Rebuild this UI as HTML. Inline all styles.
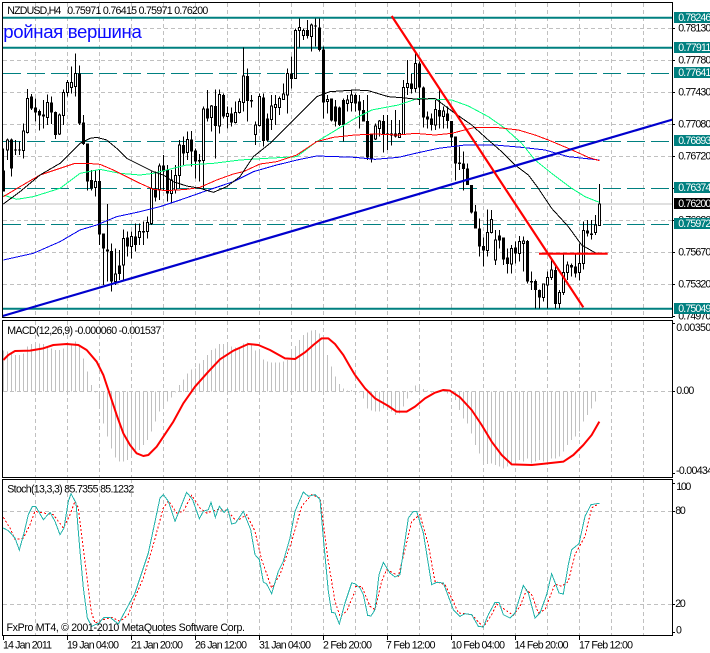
<!DOCTYPE html>
<html><head><meta charset="utf-8"><title>NZDUSD,H4</title>
<style>
html,body{margin:0;padding:0;background:#fff;overflow:hidden}
svg{display:block}
text{font-family:"Liberation Sans",sans-serif;font-size:10.6px;fill:#000}
.w{fill:#fff}
</style></head><body>
<svg width="710" height="653" viewBox="0 0 710 653" xmlns="http://www.w3.org/2000/svg">
<rect width="710" height="653" fill="#fff"/>
<!-- vertical grid -->
<path fill="none" stroke="#c0c0c0" stroke-dasharray="4 3" d="M35.5 3V317M67.5 3V317M99.5 3V317M131.5 3V317M163.5 3V317M195.5 3V317M227.5 3V317M259.5 3V317M291.5 3V317M323.5 3V317M355.5 3V317M387.5 3V317M419.5 3V317M451.5 3V317M483.5 3V317M515.5 3V317M547.5 3V317M579.5 3V317M611.5 3V317M643.5 3V317
M35.5 321V477M67.5 321V477M99.5 321V477M131.5 321V477M163.5 321V477M195.5 321V477M227.5 321V477M259.5 321V477M291.5 321V477M323.5 321V477M355.5 321V477M387.5 321V477M419.5 321V477M451.5 321V477M483.5 321V477M515.5 321V477M547.5 321V477M579.5 321V477M611.5 321V477M643.5 321V477
M35.5 479V635M67.5 479V635M99.5 479V635M131.5 479V635M163.5 479V635M195.5 479V635M227.5 479V635M259.5 479V635M291.5 479V635M323.5 479V635M355.5 479V635M387.5 479V635M419.5 479V635M451.5 479V635M483.5 479V635M515.5 479V635M547.5 479V635M579.5 479V635M611.5 479V635M643.5 479V635
M3 28.5H672M3 60.5H672M3 92.5H672M3 124.5H672M3 156.5H672M3 220.5H672M3 252.5H672M3 284.5H672
M3 391.5H672M3 511.5H672M3 604.5H672"/>
<!-- horizontal levels -->
<path fill="none" stroke="#c0c0c0" d="M3 204H672"/>
<path fill="none" stroke="#008080" stroke-width="2" d="M3 17.7H672M3 47.7H672M3 308.7H672"/>
<path fill="none" stroke="#008080" stroke-dasharray="18 6" d="M3 73.5H672M3 141.5H672M3 188.5H672M3 224.5H672"/>
<!-- left half candles + MAs, 3x coordinates -->
<g transform="scale(.33333)">
<path fill="none" stroke="#000" stroke-width="3" shape-rendering="crispEdges" d="M10.5 445V575M22.5 415V480M34.5 415V530M46.5 420V465M58.5 425V465M70.5 370V475M82.5 267V400M94.5 282V330M106.5 295V365M118.5 328V392M130.5 300V385M142.5 283V375M154.5 290V372M166.5 335V417M178.5 340V405M190.5 268V375M202.5 240V290M214.5 200V280M226.5 160V290M238.5 197V375M250.5 345V435M262.5 430V572M274.5 510V572M286.5 510V590M298.5 510V735M310.5 700V855M322.5 612V845M334.5 730V875M346.5 745V855M358.5 750V840M370.5 688V838M382.5 695V770M394.5 695V775M406.5 670V755M418.5 670V735M430.5 665V735M442.5 650V715M454.5 515V675M466.5 515V605M478.5 490V600M490.5 465V570M502.5 495V605M514.5 510V610M526.5 495V580M538.5 420V565M550.5 410V495M562.5 395V480M574.5 393V500M586.5 445V535M598.5 462V545M610.5 320V565M622.5 270V365M634.5 315V395M646.5 268V475M658.5 268V400M670.5 280V355M682.5 320V385M694.5 322V380M706.5 305V370M718.5 295V340M730.5 142V335M742.5 205V365M754.5 285V322M766.5 365V435M778.5 280V380M790.5 280V440M802.5 340V425M814.5 285V390M826.5 285V375M838.5 290V345M850.5 250V300M862.5 205V340M874.5 170V265M886.5 85V235M898.5 55V142M910.5 85V120M922.5 60V115M934.5 70V155M946.5 55V140M958.5 55V155M970.5 140V355M982.5 285V340M994.5 295V365M1006.5 300V380M1018.5 320V378M1030.5 295V425M1042.5 285V335M1054.5 268V335"/>
<path fill="none" stroke="#000" stroke-width="9" shape-rendering="crispEdges" d="M10.5 512V575M34.5 418V505M46.5 449V452M58.5 449V452M94.5 290V325M106.5 322V338M118.5 333V347M130.5 343V350M154.5 307V337M166.5 336V405M238.5 220V370M250.5 367V432M262.5 430V545M274.5 540V565M298.5 543V703M310.5 700V745M322.5 748V755M334.5 753V845M358.5 797V822M382.5 712V740M406.5 710V735M430.5 693V698M466.5 565V592M490.5 497V515M502.5 510V580M550.5 435V460M574.5 418V455M586.5 452V485M598.5 480V484M622.5 325V355M646.5 318V378M670.5 285V350M694.5 340V367M742.5 228V303M754.5 300V304M790.5 293V423M802.5 355V422M874.5 220V237M922.5 90V108M946.5 77V80M958.5 82V150M970.5 148V308M994.5 295V362M1006.5 320V365M1018.5 322V375M1030.5 300V375"/>
<path fill="#fff" stroke="#000" stroke-width="3" shape-rendering="crispEdges" d="M19.5 420h6V450h-6zM67.5 393h6V452h-6zM79.5 295h6V398h-6zM139.5 307h6V352h-6zM175.5 345h6V402h-6zM187.5 277h6V347h-6zM199.5 247h6V277h-6zM211.5 247h6V262h-6zM223.5 220h6V260h-6zM283.5 545h6V563h-6zM343.5 822h6V845h-6zM367.5 715h6V795h-6zM391.5 710h6V740h-6zM415.5 695h6V712h-6zM439.5 668h6V695h-6zM451.5 565h6V670h-6zM475.5 498h6V568h-6zM511.5 540h6V580h-6zM523.5 527h6V570h-6zM535.5 435h6V527h-6zM559.5 418h6V457h-6zM607.5 327h6V482h-6zM631.5 318h6V352h-6zM655.5 283h6V378h-6zM679.5 340h6V350h-6zM703.5 337h6V368h-6zM715.5 305h6V337h-6zM727.5 228h6V307h-6zM763.5 375h6V403h-6zM775.5 290h6V377h-6zM811.5 318h6V358h-6zM823.5 313h6V323h-6zM835.5 296h6V323h-6zM847.5 282h6V298h-6zM859.5 220h6V285h-6zM883.5 92h6V235h-6zM895.5 82h6V92h-6zM907.5 92h6V107h-6zM931.5 75h6V110h-6zM979.5 298h6V305h-6zM1039.5 300h6V310h-6zM1051.5 285h6V308h-6z"/>
<g fill="none" stroke-width="3" shape-rendering="crispEdges">
<path stroke="#0000ee" d="M10 780L100 760 180 725 240 690 290 675 350 650 420 635 480 620 540 600 620 572 700 545 760 515 830 495 900 478 950 468 1010 470 1065 472"/>
<path stroke="#00ff7f" d="M10 585L50 598 100 590 180 565 240 520 300 508 360 520 420 525 460 520 500 510 560 495 640 490 720 480 800 475 890 470 950 425 1000 395 1065 355"/>
<path stroke="#f00" d="M10 590L60 560 120 525 180 505 225 490 260 490 300 493 340 510 380 530 420 550 460 568 500 572 560 568 600 562 650 540 700 522 730 515 780 492 830 485 890 465 950 425 1000 412 1065 405"/>
<path stroke="#000" d="M10 612L60 575 120 525 180 490 240 430 270 415 290 412 320 420 350 445 380 475 430 500 460 515 490 525 520 545 560 558 600 565 640 577 680 560 720 530 760 470 810 430 860 380 910 330 950 290 990 275 1065 270"/>
</g>
</g>
<!-- right half candles + MAs -->
<g transform="translate(355,0) scale(.33333)">
<path fill="none" stroke="#000" stroke-width="3" shape-rendering="crispEdges" d="M1.5 280V335M13.5 285V385M25.5 300V365M37.5 285V480M49.5 400V488M61.5 370V420M73.5 360V410M85.5 345V458M97.5 345V450M109.5 360V437M121.5 330V412M133.5 360V412M145.5 240V405M157.5 180V285M169.5 222V280M181.5 160V278M193.5 185V315M205.5 260V382M217.5 335V385M229.5 340V392M241.5 300V390M253.5 270V385M265.5 320V385M277.5 320V385M289.5 363V440M301.5 410V542M313.5 440V510M325.5 455V572M337.5 490V555M349.5 555V640M361.5 615V685M373.5 655V770M385.5 712V800M397.5 628V770M409.5 630V700M421.5 690V795M433.5 690V745M445.5 712V795M457.5 745V820M469.5 735V820M481.5 725V790M493.5 708V785M505.5 710V815M517.5 720V850M529.5 815V870M541.5 838V925M553.5 868V925M565.5 850V905M577.5 815V925M589.5 775V840M601.5 790V925M613.5 870V925M625.5 762V885M637.5 785V840M649.5 790V830M661.5 762V832M673.5 730V842M685.5 665V808M697.5 660V710M709.5 660V718M721.5 645V705M733.5 552V677"/>
<path fill="none" stroke="#000" stroke-width="9" shape-rendering="crispEdges" d="M1.5 285V310M13.5 305V332M25.5 330V365M37.5 363V473M49.5 403V475M85.5 363V405M97.5 400V405M109.5 400V406M121.5 400V410M169.5 250V267M193.5 190V262M205.5 262V352M217.5 350V358M229.5 355V375M253.5 330V350M277.5 340V363M289.5 363V412M301.5 410V490M313.5 488V492M325.5 490V507M337.5 505V555M349.5 555V638M361.5 635V685M373.5 685V740M385.5 738V752M433.5 707V722M445.5 712V778M457.5 772V792M481.5 743V760M517.5 723V845M529.5 843V848M541.5 843V870M553.5 870V892M601.5 810V912M649.5 795V802M661.5 800V820M697.5 692V700M709.5 700V705"/>
<path fill="#fff" stroke="#000" stroke-width="3" shape-rendering="crispEdges" d="M58.5 378h6V417h-6zM70.5 363h6V385h-6zM130.5 400h6V412h-6zM142.5 262h6V403h-6zM154.5 250h6V262h-6zM178.5 190h6V265h-6zM238.5 328h6V375h-6zM262.5 333h6V350h-6zM394.5 697h6V752h-6zM406.5 658h6V697h-6zM418.5 720h6V780h-6zM466.5 745h6V792h-6zM490.5 725h6V760h-6zM502.5 723h6V730h-6zM562.5 852h6V892h-6zM574.5 832h6V855h-6zM586.5 810h6V832h-6zM610.5 878h6V910h-6zM622.5 818h6V878h-6zM634.5 795h6V818h-6zM670.5 790h6V818h-6zM682.5 692h6V790h-6zM718.5 675h6V698h-6zM730.5 612h6V677h-6z"/>
<g fill="none" stroke-width="3" shape-rendering="crispEdges">
<path stroke="#0000ee" d="M0 472L60 478 130 472 190 458 250 445 330 435 420 435 500 442 570 450 640 470 733 480"/>
<path stroke="#00ff7f" d="M0 355L50 330 130 315 190 295 290 300 340 318 400 350 450 385 500 430 540 480 590 520 650 565 690 590 733 607"/>
<path stroke="#f00" d="M0 405L60 402 130 405 180 400 240 405 290 400 360 382 430 383 490 390 540 405 580 420 640 445 700 472 733 482"/>
<path stroke="#000" d="M0 270L40 272 100 290 140 293 190 298 240 295 300 340 350 375 400 420 440 455 480 495 520 525 550 565 590 625 640 680 680 735 720 758 733 760"/>
</g>
</g>
<!-- trend lines -->
<path fill="none" stroke="#0000cd" stroke-width="2.2" d="M2.7 316L672.7 119.5"/>
<path fill="none" stroke="#f00" stroke-width="2.2" d="M391.7 16L583.3 307.3M539 253.7H607.7"/>
<!-- MACD histogram -->
<g transform="scale(.33333)">
<path fill="none" stroke="#c0c0c0" stroke-width="3" shape-rendering="crispEdges" transform="translate(0,960)" d="M10.5 214V92M22.5 214V95M34.5 214V98M46.5 214V105M58.5 214V105M70.5 214V100M82.5 214V80M94.5 214V72M106.5 214V70M118.5 214V70M130.5 214V72M142.5 214V80M154.5 214V85M166.5 214V90M178.5 214V90M190.5 214V85M202.5 214V75M214.5 214V75M226.5 214V65M238.5 214V75M250.5 214V115M262.5 214V155M274.5 214V195M286.5 214V217M298.5 214V255M310.5 214V310M322.5 214V350M334.5 214V385M346.5 214V412M358.5 214V425M370.5 214V425M382.5 214V420M394.5 214V405M406.5 214V390M418.5 214V390M430.5 214V375M442.5 214V360M454.5 214V335M466.5 214V305M478.5 214V275M490.5 214V260M502.5 214V245M514.5 214V232M526.5 214V218M538.5 214V195M550.5 214V178M562.5 214V160M574.5 214V148M586.5 214V145M598.5 214V130M610.5 214V120M622.5 214V105M634.5 214V90M646.5 214V85M658.5 214V72M670.5 214V72M682.5 214V72M694.5 214V80M706.5 214V82M718.5 214V85M730.5 214V70M742.5 214V68M754.5 214V70M766.5 214V92M778.5 214V95M790.5 214V118M802.5 214V125M814.5 214V128M826.5 214V128M838.5 214V128M850.5 214V125M862.5 214V120M874.5 214V90M886.5 214V78M898.5 214V60M910.5 214V45M922.5 214V38M934.5 214V32M946.5 214V30M958.5 214V40M970.5 214V55M982.5 214V105M994.5 214V140M1006.5 214V170M1018.5 214V192M1030.5 214V205M1042.5 214V212M1054.5 214V210"/>
<path fill="none" stroke="#f00" stroke-width="6" stroke-linejoin="round" transform="translate(0,960)" d="M10 120L25 105 45 93 90 92 130 85 160 75 200 72 235 75 260 90 290 125 310 165 330 225 350 285 370 340 390 375 410 400 430 408 445 405 470 380 490 350 520 305 550 250 585 200 625 155 660 118 700 92 745 72 775 75 810 90 855 115 885 117 915 97 940 75 965 55 985 55 1005 72 1030 105 1050 140 1065 165"/>
</g>
<g transform="translate(355,320) scale(.33333)">
<path fill="none" stroke="#c0c0c0" stroke-width="3" shape-rendering="crispEdges" d="M13.5 214V218M25.5 214V235M37.5 214V265M49.5 214V272M61.5 214V275M73.5 214V275M85.5 214V265M97.5 214V270M109.5 214V275M121.5 214V285M133.5 214V280M145.5 214V260M157.5 214V235M169.5 214V218M181.5 214V197M193.5 214V197M205.5 214V207M217.5 214V212M229.5 214V218M241.5 214V218M265.5 214V216M277.5 214V220M289.5 214V228M301.5 214V240M313.5 214V270M325.5 214V295M337.5 214V310M349.5 214V340M361.5 214V375M373.5 214V400M385.5 214V425M397.5 214V432M409.5 214V430M421.5 214V435M433.5 214V440M445.5 214V445M457.5 214V440M469.5 214V435M481.5 214V435M493.5 214V420M505.5 214V425M517.5 214V415M529.5 214V430M541.5 214V425M553.5 214V420M565.5 214V425M577.5 214V425M589.5 214V415M601.5 214V415M613.5 214V410M625.5 214V395M637.5 214V375M649.5 214V360M661.5 214V350M673.5 214V335M685.5 214V305M697.5 214V285M709.5 214V265M721.5 214V245"/>
<path fill="none" stroke="#f00" stroke-width="6" stroke-linejoin="round" d="M0 165L30 205 60 235 100 258 125 275 155 275 180 260 210 235 240 218 265 210 285 212 315 232 350 270 380 315 410 365 440 405 470 433 530 435 570 431 625 425 655 405 685 375 710 345 733 305"/>
</g>
<!-- Stochastic -->
<g transform="translate(0,478) scale(.33333)" fill="none" stroke-width="3" shape-rendering="crispEdges">
<path stroke="#f00" stroke-dasharray="6 6" d="M10 118L30 150 45 185 70 180 90 140 105 100 130 105 160 110 190 150 210 110 225 70 235 90 250 210 262 310 275 405 285 435 310 425 335 418 360 430 385 410 400 370 430 300 460 200 490 90 505 68 530 105 550 100 575 52 600 90 620 105 650 95 680 97 710 130 740 110 765 160 785 245 815 330 840 290 875 190 905 85 935 50 960 60 985 250 1005 370 1020 415 1040 400 1065 340"/>
<path stroke="#20b2aa" d="M10 150L25 158 45 180 58 216 72 165 85 110 97 86 107 85 130 125 150 103 165 130 180 170 192 150 205 70 213 47 228 75 240 220 250 330 262 420 275 445 297 435 312 418 330 418 355 438 370 410 405 345 430 270 445 225 480 60 490 50 505 70 525 130 560 43 578 65 598 122 610 100 625 95 633 73 646 118 658 85 672 103 683 92 695 138 707 135 730 100 752 155 765 230 778 245 790 312 800 318 815 347 835 280 850 250 870 180 885 100 910 42 925 55 945 50 960 65 970 180 985 340 995 403 1005 405 1018 438 1035 375 1055 315 1065 317"/>
</g>
<g transform="translate(355,478) scale(.33333)" fill="none" stroke-width="3" shape-rendering="crispEdges">
<path stroke="#f00" stroke-dasharray="6 6" d="M0 325L20 325 45 385 60 395 80 310 95 275 115 285 130 295 150 215 170 130 195 110 220 200 240 310 270 320 295 370 310 405 350 410 385 447 410 410 425 378 450 395 475 412 495 385 515 335 530 350 550 405 570 395 600 318 620 325 640 310 660 230 690 175 710 90 733 76"/>
<path stroke="#20b2aa" d="M0 317L15 330 25 350 38 412 48 414 60 395 72 290 85 253 105 285 120 297 135 290 160 120 175 100 185 100 205 165 230 320 245 313 265 315 295 395 315 415 330 407 350 410 370 445 385 447 400 410 420 373 432 373 445 410 465 420 480 405 505 322 520 345 540 420 555 405 575 350 590 287 612 345 625 348 640 260 650 215 672 197 690 115 708 80 733 76"/>
</g>
<!-- frames -->
<path fill="none" stroke="#000" shape-rendering="crispEdges" d="M2.5 2.5H672.5V317.5H2.5ZM2.5 320.5H672.5V477.5H2.5ZM2.5 479.5H672.5V635.5H2.5Z
M672 28.5h3M672 60.5h3M672 92.5h3M672 124.5h3M672 156.5h3M672 188.5h3M672 220.5h3M672 252.5h3M672 284.5h3M672 316.5h3
M672 323.5h3M672 391.5h3M672 473.5h3M672 483.5h3M672 511.5h3M672 604.5h3M672 632.5h3
M3.5 636v4M67.5 636v4M131.5 636v4M195.5 636v4M259.5 636v4M323.5 636v4M387.5 636v4M451.5 636v4M515.5 636v4M579.5 636v4"/>
<!-- titles -->
<text x="7.3" y="14" textLength="54">NZDUSD,H4</text>
<text x="67.3" y="14" textLength="141">0.75971 0.76415 0.75971 0.76200</text>
<text x="3.3" y="38" textLength="138.5" style="font-size:18.6px;fill:#0a0aff;font-family:'Liberation Sans','Noto Sans CJK SC',sans-serif">ройная вершина</text>
<text x="7.3" y="334" textLength="154">MACD(12,26,9) -0.000060 -0.001537</text>
<text x="7.3" y="492.5" textLength="127">Stoch(13,3,3) 85.7355 85.1232</text>
<text x="6.5" y="631" textLength="238.5">FxPro MT4, © 2001-2010 MetaQuotes Software Corp.</text>
<!-- axis price labels -->
<g>
<text x="678.3" y="31.5" textLength="33">0.78130</text>
<text x="678.3" y="63.5" textLength="33">0.77780</text>
<text x="678.3" y="95.5" textLength="33">0.77430</text>
<text x="678.3" y="127.5" textLength="33">0.77080</text>
<text x="678.3" y="159.5" textLength="33">0.76720</text>
<text x="678.3" y="223.5" textLength="33">0.76020</text>
<text x="678.3" y="255.5" textLength="33">0.75670</text>
<text x="678.3" y="287.5" textLength="33">0.75320</text>
<text x="678.3" y="319.5" textLength="33">0.74970</text>
</g>
<g shape-rendering="crispEdges" fill="#008080">
<rect x="674" y="12" width="36" height="11"/>
<rect x="674" y="42" width="36" height="11"/>
<rect x="674" y="67" width="36" height="11"/>
<rect x="674" y="135" width="36" height="11"/>
<rect x="674" y="182" width="36" height="11"/>
<rect x="674" y="218" width="36" height="11"/>
<rect x="674" y="303" width="36" height="11"/>
<rect x="674" y="198" width="36" height="11" fill="#000"/>
</g>
<text class="w" x="678.3" y="21" textLength="33">0.78246</text>
<text class="w" x="678.3" y="51" textLength="33">0.77911</text>
<text class="w" x="678.3" y="76" textLength="33">0.77641</text>
<text class="w" x="678.3" y="144" textLength="33">0.76893</text>
<text class="w" x="678.3" y="191" textLength="33">0.76374</text>
<text class="w" x="678.3" y="207" textLength="33">0.76200</text>
<text class="w" x="678.3" y="227" textLength="33">0.75972</text>
<text class="w" x="678.3" y="312" textLength="33">0.75049</text>
<!-- MACD / Stoch axis -->
<text x="676.3" y="331" textLength="35">0.00350</text>
<text x="676.3" y="394" textLength="18">0.00</text>
<text x="676" y="474" textLength="37">-0.00434</text>
<text x="676.3" y="490" textLength="15">100</text>
<text x="675.3" y="514" textLength="10.5">80</text>
<text x="675.3" y="607" textLength="10.5">20</text>
<text x="676" y="633.5">0</text>
<!-- time labels -->
<text x="3" y="648.5" textLength="49">14 Jan 2011</text>
<text x="67" y="648.5" textLength="52">19 Jan 04:00</text>
<text x="131" y="648.5" textLength="52">21 Jan 20:00</text>
<text x="195" y="648.5" textLength="52">26 Jan 12:00</text>
<text x="259" y="648.5" textLength="52">31 Jan 04:00</text>
<text x="323" y="648.5" textLength="49">2 Feb 20:00</text>
<text x="386" y="648.5" textLength="49.5">7 Feb 12:00</text>
<text x="451" y="648.5" textLength="54">10 Feb 04:00</text>
<text x="514.5" y="648.5" textLength="54">14 Feb 20:00</text>
<text x="579" y="648.5" textLength="54">17 Feb 12:00</text>
</svg>
</body></html>
